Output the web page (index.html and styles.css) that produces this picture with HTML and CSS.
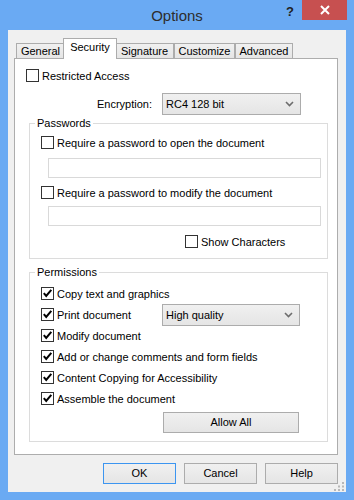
FILE: index.html
```html
<!DOCTYPE html>
<html lang="en">
<head>
  <meta charset="UTF-8">
  <title>Options</title>
  <link rel="stylesheet" href="styles.css">
</head>
<body>
  <div class="window">
    <!-- Title bar -->
    <div class="titlebar">
      <div class="title">Options</div>
      <div class="help">?</div>
      <div class="close">
        <svg width="10" height="10" viewBox="0 0 10 10"><path d="M1 1 L9 9 M9 1 L1 9" stroke="#fff" stroke-width="2"/></svg>
      </div>
    </div>

    <div class="client">
      <div class="tabs">
        <div class="tab tab-general">General</div>
        <div class="tab tab-security active">Security</div>
        <div class="tab tab-signature">Signature</div>
        <div class="tab tab-customize">Customize</div>
        <div class="tab tab-advanced">Advanced</div>
      </div>

      <div class="panel">
        <div class="row">
          <span class="check"></span>
          <span>Restricted Access</span>
        </div>

        <div class="row enc-row">
          <span class="enc-label">Encryption:</span>
          <div class="combo enc-combo">
            <span>RC4 128 bit</span>
            <svg width="9" height="6" viewBox="0 0 9 6"><path d="M1 1 L4.5 4.5 L8 1" stroke="#6d6d6d" stroke-width="1.6" fill="none"/></svg>
          </div>
        </div>

        <fieldset class="group group-pass">
          <legend>Passwords</legend>
          <div class="row first">
            <span class="check"></span>
            <span>Require a password to open the document</span>
          </div>
          <div class="textbox tb-open"></div>
          <div class="row modify">
            <span class="check"></span>
            <span>Require a password to modify the document</span>
          </div>
          <div class="textbox tb-modify"></div>
          <div class="row show">
            <span class="check"></span>
            <span>Show Characters</span>
          </div>
        </fieldset>

        <fieldset class="group group-perm">
          <legend>Permissions</legend>
          <div class="perm-list">
            <div class="prow">
              <span class="check on"><svg width="11" height="11" viewBox="0 0 11 11"><path d="M1.8 5.2 L4.2 8 L9.3 1.8" stroke="#000" stroke-width="2" fill="none"/></svg></span>
              <span>Copy text and graphics</span>
            </div>
            <div class="prow">
              <span class="print-label">
                <span class="check on"><svg width="11" height="11" viewBox="0 0 11 11"><path d="M1.8 5.2 L4.2 8 L9.3 1.8" stroke="#000" stroke-width="2" fill="none"/></svg></span>
                <span>Print document</span>
              </span>
              <div class="combo print-combo">
                <span>High quality</span>
                <svg width="9" height="6" viewBox="0 0 9 6"><path d="M1 1 L4.5 4.5 L8 1" stroke="#6d6d6d" stroke-width="1.6" fill="none"/></svg>
              </div>
            </div>
            <div class="prow">
              <span class="check on"><svg width="11" height="11" viewBox="0 0 11 11"><path d="M1.8 5.2 L4.2 8 L9.3 1.8" stroke="#000" stroke-width="2" fill="none"/></svg></span>
              <span>Modify document</span>
            </div>
            <div class="prow">
              <span class="check on"><svg width="11" height="11" viewBox="0 0 11 11"><path d="M1.8 5.2 L4.2 8 L9.3 1.8" stroke="#000" stroke-width="2" fill="none"/></svg></span>
              <span>Add or change comments and form fields</span>
            </div>
            <div class="prow">
              <span class="check on"><svg width="11" height="11" viewBox="0 0 11 11"><path d="M1.8 5.2 L4.2 8 L9.3 1.8" stroke="#000" stroke-width="2" fill="none"/></svg></span>
              <span>Content Copying for Accessibility</span>
            </div>
            <div class="prow">
              <span class="check on"><svg width="11" height="11" viewBox="0 0 11 11"><path d="M1.8 5.2 L4.2 8 L9.3 1.8" stroke="#000" stroke-width="2" fill="none"/></svg></span>
              <span>Assemble the document</span>
            </div>
          </div>
          <div class="btn allow-all">Allow All</div>
        </fieldset>
      </div>

      <div class="buttons">
        <div class="btn default">OK</div>
        <div class="btn">Cancel</div>
        <div class="btn">Help</div>
      </div>

      <!-- size grip -->
      <svg class="grip" width="10" height="9" viewBox="0 0 10 9">
        <rect x="8" y="0" width="2" height="2" fill="#b8b8b8"/>
        <rect x="4" y="3.5" width="2" height="2" fill="#b8b8b8"/>
        <rect x="8" y="3.5" width="2" height="2" fill="#b8b8b8"/>
        <rect x="0" y="7" width="2" height="2" fill="#b8b8b8"/>
        <rect x="4" y="7" width="2" height="2" fill="#b8b8b8"/>
        <rect x="8" y="7" width="2" height="2" fill="#b8b8b8"/>
      </svg>
    </div>
  </div>
</body>
</html>
```

FILE: styles.css
```css
body {
  margin: 0;
  padding: 0;
  font-family: "Liberation Sans", Arial, sans-serif;
  font-size: 11px;
  color: #000;
  background: #6aaaf3;
}
.window {
  width: 354px;
  height: 500px;
  box-sizing: border-box;
  background: #6aaaf3;
  padding: 0 8px 8px 8px;
}
.titlebar {
  height: 30px;
  display: flex;
  align-items: flex-start;
  margin: 0 -8px;
}
.title {
  flex: 1;
  padding-left: 74px;
  text-align: center;
  font-size: 15px;
  line-height: 31px;
  color: #2d2d2d;
}
.help {
  width: 20px;
  margin-top: 4px;
  font-size: 13px;
  font-weight: bold;
  color: #222;
  line-height: 16px;
  text-align: center;
}
.close {
  width: 45px;
  height: 20px;
  margin-left: 2px;
  margin-right: 7px;
  background: #c75050;
  display: flex;
  align-items: center;
  justify-content: center;
}
.client {
  position: relative;
  height: 462px;
  background: #f0f0f0;
  padding: 8px 8px 0 6px;
  box-sizing: border-box;
}

/* Tabs */
.tabs {
  display: flex;
  align-items: flex-end;
  height: 20px;
  padding-left: 2px;
}
.tab {
  height: 14px;
  line-height: 14px;
  text-align: center;
  border: 1px solid #acacac;
  border-bottom: none;
  background: linear-gradient(#f0f0f0, #e5e5e5);
}
.tab-general { width: 47px; }
.tab-signature { width: 57px; }
.tab-customize { width: 59px; }
.tab-advanced { width: 56px; }
.tab.active {
  position: relative;
  z-index: 1;
  width: 52px;
  height: 20px;
  line-height: 16px;
  margin: 0 -2px -1px -2px;
  background: #fff;
}

.panel {
  background: #fff;
  border: 1px solid #adadad;
  padding: 9px 0 0 0;
  height: 386px;
}
.row {
  display: flex;
  align-items: center;
  height: 15px;
  padding-left: 11px;
}
.check {
  width: 11px;
  height: 11px;
  border: 1px solid #333;
  background: #fff;
  margin-right: 3px;
  flex: none;
  display: flex;
}
.enc-row {
  margin-top: 10px;
  height: 22px;
  padding-left: 0;
}
.enc-label {
  width: 137px;
  text-align: right;
  margin-right: 10px;
}
.combo {
  height: 20px;
  border: 1px solid #acacac;
  background: linear-gradient(#f0f0f0, #e5e5e5);
  display: flex;
  align-items: center;
  justify-content: space-between;
  padding: 0 6px 0 3px;
}
.enc-combo { width: 128px; }

.group {
  margin: 1px 9px 0 14px;
  padding: 0 0 9px 0;
  border: 1px solid #dcdcdc;
  min-width: 0;
}
.group legend {
  padding: 0 2px;
  margin-left: 5px;
  line-height: 15px;
}
.group .row { padding-left: 11px; }
.group-pass .first { margin-top: 4px; }
.textbox {
  height: 18px;
  width: 271px;
  border: 1px solid #d9d9d9;
  background: #fff;
  margin-left: 18px;
}
.tb-open { margin-top: 8px; }
.group-pass .modify { margin-top: 7px; }
.tb-modify { margin-top: 6px; }
.group-pass .show {
  margin-top: 8px;
  padding-left: 155px;
}

.group-perm {
  margin-top: 6px;
  padding-bottom: 8px;
}
.perm-list { margin-top: 3px; }
.prow {
  height: 21px;
  display: flex;
  align-items: center;
  padding-left: 11px;
}
.print-label {
  display: flex;
  align-items: center;
  width: 121px;
}
.print-combo { width: 127px; }

.btn {
  height: 19px;
  line-height: 19px;
  text-align: center;
  border: 1px solid #acacac;
  background: linear-gradient(#f0f0f0, #e5e5e5);
}
.allow-all {
  width: 134px;
  margin: 3px 0 0 133px;
}
.buttons {
  display: flex;
  justify-content: flex-end;
  gap: 8px;
  margin-top: 8px;
}
.buttons .btn { width: 71px; }
.btn.default { border-color: #3c95f0; }
.grip {
  position: absolute;
  right: 2px;
  bottom: 1px;
}
```
